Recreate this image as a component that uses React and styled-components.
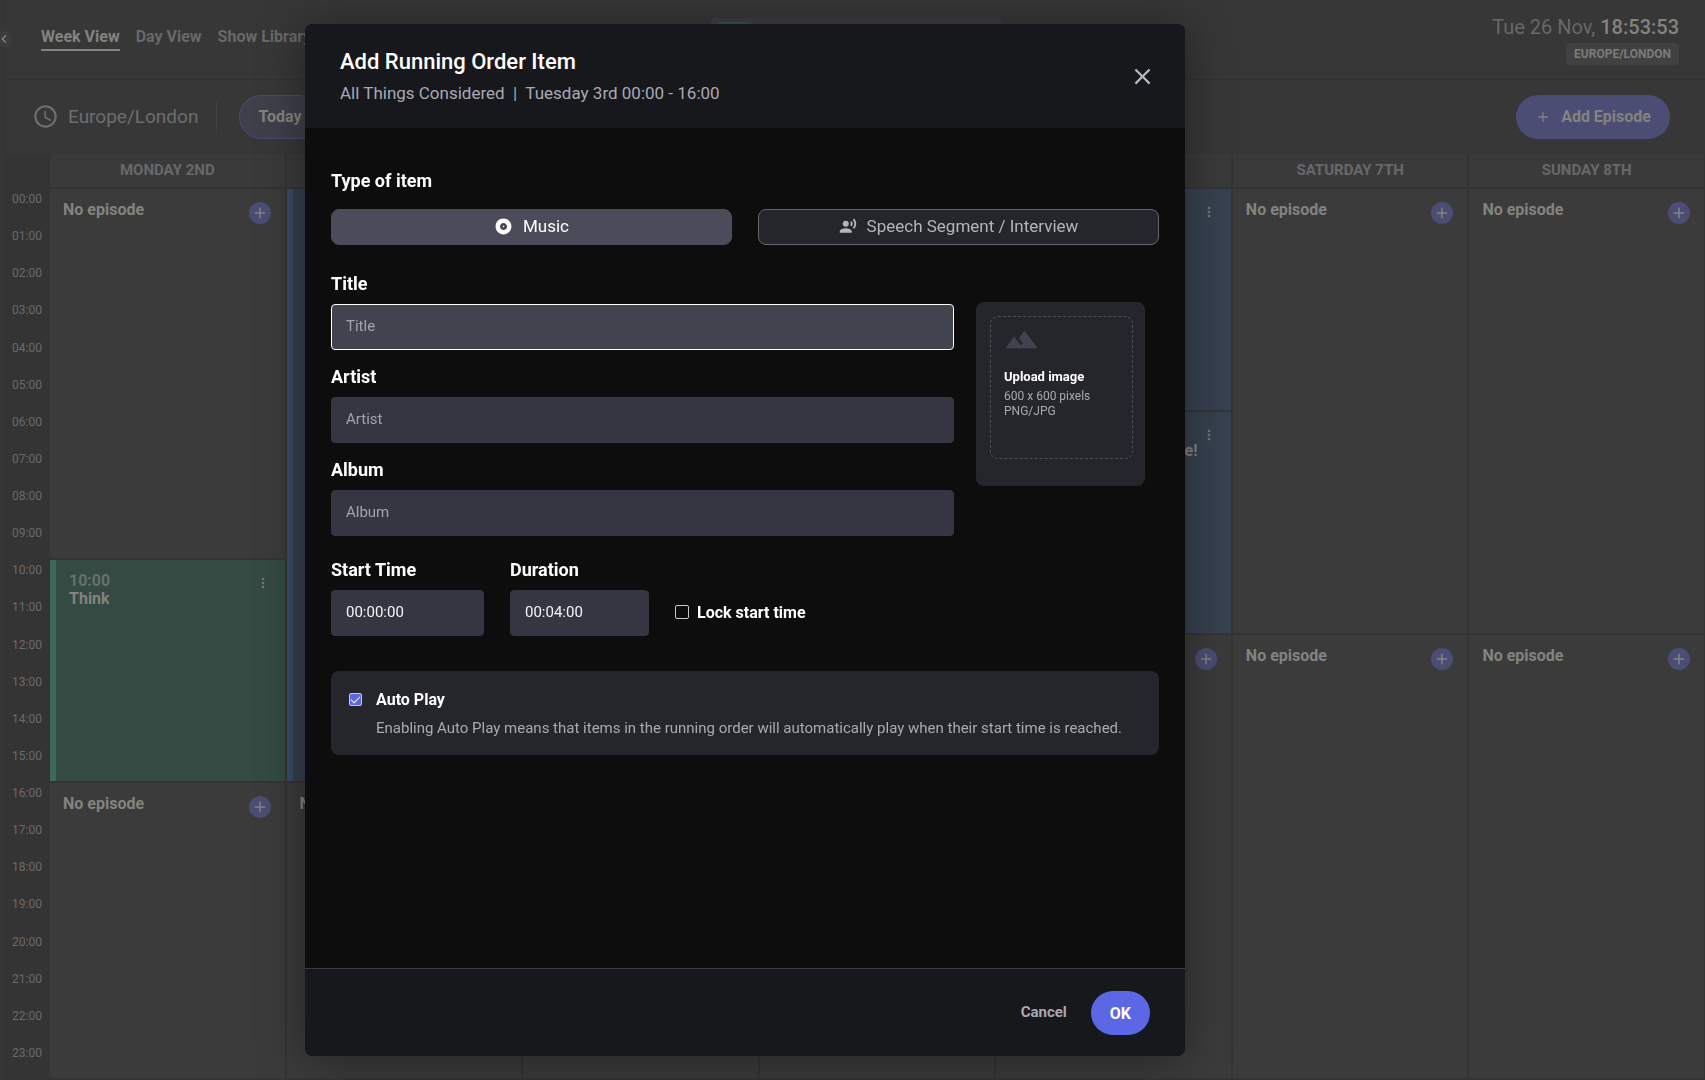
import { useState } from "react";
import styled, { createGlobalStyle, css } from "styled-components";
import {
  MdAccessTime,
  MdAdd,
  MdAlbum,
  MdChevronLeft,
  MdClose,
  MdLandscape,
  MdMoreVert,
  MdRecordVoiceOver,
} from "react-icons/md";

const HOURS = Array.from({ length: 24 }, (_, i) => `${String(i).padStart(2, "0")}:00`);

const DAYS = [
  {
    name: "Monday 2nd",
    slots: [
      { hours: 10 },
      { hours: 6, time: "10:00", title: "Think", tone: "green" },
      { hours: 8 },
    ],
  },
  {
    name: "Tuesday 3rd",
    slots: [
      { hours: 16, time: "00:00", title: "All Things Considered", tone: "blue" },
      { hours: 8 },
    ],
  },
  { name: "Wednesday 4th", slots: [{ hours: 12 }, { hours: 12 }] },
  { name: "Thursday 5th", slots: [{ hours: 12 }, { hours: 12 }] },
  {
    name: "Friday 6th",
    slots: [
      { hours: 6, time: "00:00", title: "Think", tone: "slate" },
      { hours: 6, time: "06:00", title: "Wait Wait... Don't Tell Me!", tone: "slate" },
      { hours: 12 },
    ],
  },
  { name: "Saturday 7th", slots: [{ hours: 12 }, { hours: 12 }] },
  { name: "Sunday 8th", slots: [{ hours: 12 }, { hours: 12 }] },
];

const TONES = {
  green: { bar: "#3a6b5a", fill: "#344a42" },
  blue: { bar: "#3b4969", fill: "#353f4f" },
  slate: { bar: "#3b4969", fill: "#37414f" },
};

function Slot({ slot }) {
  if (!slot.title) {
    return (
      <EmptySlotStyled>
        <SlotTitleStyled>No episode</SlotTitleStyled>
        <RoundButtonStyled type="button" aria-label="Add episode">
          <MdAdd size={18} />
        </RoundButtonStyled>
      </EmptySlotStyled>
    );
  }
  return (
    <EpisodeStyled $tone={TONES[slot.tone]}>
      <div>
        <SlotTimeStyled>{slot.time}</SlotTimeStyled>
        <SlotTitleStyled>{slot.title}</SlotTitleStyled>
      </div>
      <KebabStyled type="button" aria-label="Episode options">
        <MdMoreVert size={16} />
      </KebabStyled>
    </EpisodeStyled>
  );
}

function Schedule() {
  return (
    <PageStyled inert>
      <RailStyled>
        <CollapseStyled type="button" aria-label="Collapse menu">
          <MdChevronLeft size={16} />
        </CollapseStyled>
      </RailStyled>
      <TopBarStyled>
        <NavStyled>
          <NavLinkStyled href="#week" $active>
            Week View
          </NavLinkStyled>
          <NavLinkStyled href="#day">Day View</NavLinkStyled>
          <NavLinkStyled href="#library">Show Library</NavLinkStyled>
        </NavStyled>
        <NowPlayingStyled>
          <NowPlayingTagStyled />
        </NowPlayingStyled>
        <ClockStyled>
          <DateStyled>
            Tue 26 Nov, <strong>18:53:53</strong>
          </DateStyled>
          <ZoneBadgeStyled>EUROPE/LONDON</ZoneBadgeStyled>
        </ClockStyled>
      </TopBarStyled>
      <ToolbarStyled>
        <ZoneStyled>
          <MdAccessTime size={27} />
          Europe/London
        </ZoneStyled>
        <TodayStyled type="button">Today</TodayStyled>
        <AddEpisodeStyled type="button">
          <MdAdd size={16} />
          Add Episode
        </AddEpisodeStyled>
      </ToolbarStyled>
      <CalendarStyled>
        <HoursStyled>
          {HOURS.map((hour) => (
            <li key={hour}>{hour}</li>
          ))}
        </HoursStyled>
        <WeekStyled>
          {DAYS.map((day) => (
            <DayStyled key={day.name} $slots={day.slots}>
              <DayNameStyled>{day.name}</DayNameStyled>
              {day.slots.map((slot, i) => (
                <Slot key={i} slot={slot} />
              ))}
            </DayStyled>
          ))}
        </WeekStyled>
      </CalendarStyled>
    </PageStyled>
  );
}

function Field({ id, label, ...props }) {
  return (
    <FieldStyled>
      <LabelStyled htmlFor={id}>{label}</LabelStyled>
      <InputStyled id={id} type="text" {...props} />
    </FieldStyled>
  );
}

function AddItemModal() {
  const [type, setType] = useState("music");
  const [locked, setLocked] = useState(false);
  const [autoPlay, setAutoPlay] = useState(true);
  return (
    <OverlayStyled>
      <ModalStyled role="dialog" aria-modal="true" aria-labelledby="modal-title">
        <ModalHeaderStyled>
          <div>
            <ModalTitleStyled id="modal-title">Add Running Order Item</ModalTitleStyled>
            <ModalSubtitleStyled>
              All Things Considered&nbsp; |&nbsp; Tuesday 3rd 00:00 - 16:00
            </ModalSubtitleStyled>
          </div>
          <CloseStyled type="button" aria-label="Close">
            <MdClose size={27} />
          </CloseStyled>
        </ModalHeaderStyled>
        <ModalBodyStyled>
          <GroupTitleStyled>Type of item</GroupTitleStyled>
          <TypesStyled>
            <TypeButtonStyled
              type="button"
              $active={type === "music"}
              onClick={() => setType("music")}
            >
              <MdAlbum size={19} />
              Music
            </TypeButtonStyled>
            <TypeButtonStyled
              type="button"
              $active={type === "speech"}
              onClick={() => setType("speech")}
            >
              <MdRecordVoiceOver size={18} />
              Speech Segment / Interview
            </TypeButtonStyled>
          </TypesStyled>
          <DetailsStyled>
            <FieldsStyled>
              <Field id="title" label="Title" placeholder="Title" $active />
              <Field id="artist" label="Artist" placeholder="Artist" />
              <Field id="album" label="Album" placeholder="Album" />
            </FieldsStyled>
            <UploadCardStyled>
              <DropZoneStyled type="button">
                <MdLandscape size={35} />
                <strong>Upload image</strong>
                <span>600 x 600 pixels</span>
                <span>PNG/JPG</span>
              </DropZoneStyled>
            </UploadCardStyled>
          </DetailsStyled>
          <TimingStyled>
            <Field id="start" label="Start Time" defaultValue="00:00:00" />
            <Field id="duration" label="Duration" defaultValue="00:04:00" />
            <LockStyled>
              <CheckboxStyled
                type="checkbox"
                $size={14}
                checked={locked}
                onChange={() => setLocked((prevValue) => !prevValue)}
              />
              Lock start time
            </LockStyled>
          </TimingStyled>
          <AutoPlayStyled>
            <CheckboxStyled
              id="autoplay"
              type="checkbox"
              $size={13}
              checked={autoPlay}
              onChange={() => setAutoPlay((prevValue) => !prevValue)}
            />
            <div>
              <label htmlFor="autoplay">Auto Play</label>
              <p>
                Enabling Auto Play means that items in the running order will
                automatically play when their start time is reached.
              </p>
            </div>
          </AutoPlayStyled>
        </ModalBodyStyled>
        <ModalFooterStyled>
          <CancelStyled type="button">Cancel</CancelStyled>
          <OkStyled type="button">OK</OkStyled>
        </ModalFooterStyled>
      </ModalStyled>
    </OverlayStyled>
  );
}

export default function App() {
  return (
    <>
      <GlobalStyle />
      <Schedule />
      <AddItemModal />
    </>
  );
}

const GlobalStyle = createGlobalStyle`
  * {
    box-sizing: border-box;
    margin: 0;
    padding: 0;
  }
  body {
    background: #373738;
    font-family: Roboto, "Liberation Sans", sans-serif;
    color: #fff;
  }
  button, input {
    font-family: inherit;
    border: 0;
  }
  button {
    cursor: pointer;
  }
  svg {
    display: block;
    flex: none;
  }
  ul {
    list-style: none;
  }
`;

/* ---------- schedule ---------- */

const PageStyled = styled.div`
  position: relative;
  min-height: 100vh;
  display: flex;
  flex-direction: column;
`;
const RailStyled = styled.aside`
  position: absolute;
  top: 0;
  bottom: 0;
  left: 0;
  width: 5px;
  background: #363637;
  border-right: 1px solid #333334;
`;
const CollapseStyled = styled.button`
  position: absolute;
  top: 31px;
  left: -4px;
  width: 16px;
  height: 16px;
  border-radius: 50%;
  background: #3d3d3e;
  color: #858585;
`;
const TopBarStyled = styled.header`
  display: flex;
  align-items: flex-start;
  justify-content: space-between;
  height: 80px;
  margin-left: 6px;
  padding: 0 26px 0 35px;
  border-bottom: 1px solid #323233;
`;
const NavStyled = styled.nav`
  flex: 1;
  display: flex;
  gap: 16px;
  padding-top: 28px;
`;
const NavLinkStyled = styled.a`
  padding-bottom: 3px;
  border-bottom: 2px solid ${({ $active }) => ($active ? "#83837f" : "transparent")};
  color: ${({ $active }) => ($active ? "#83837f" : "#68686a")};
  font-size: 16px;
  line-height: 18px;
  font-weight: 700;
  text-decoration: none;
`;
const NowPlayingStyled = styled.div`
  width: 291px;
  height: 44px;
  margin: 18px 9px 0 0;
  padding: 4px 7px;
  border-radius: 4px;
  background: #3f3f43;
`;
const NowPlayingTagStyled = styled.div`
  width: 34px;
  height: 20px;
  border-radius: 4px;
  background: #345650;
`;
const ClockStyled = styled.div`
  flex: 1;
  display: flex;
  flex-direction: column;
  align-items: flex-end;
  gap: 4px;
  padding-top: 15px;
`;
const DateStyled = styled.p`
  color: #68686a;
  font-size: 20px;
  line-height: 24px;
  strong {
    color: #83837f;
    font-weight: 500;
  }
`;
const ZoneBadgeStyled = styled.span`
  padding: 0 8px;
  border-radius: 4px;
  background: #414141;
  color: #7b7b79;
  font-size: 12px;
  line-height: 22px;
  font-weight: 700;
`;
const ToolbarStyled = styled.div`
  display: flex;
  align-items: center;
  height: 73px;
  padding: 0 35px 0 32px;
`;
const ZoneStyled = styled.div`
  display: flex;
  align-items: center;
  gap: 9px;
  margin-right: 22px;
  padding-right: 18px;
  border-right: 1px solid #404041;
  color: #6d6d6f;
  font-size: 19px;
  line-height: 33px;
`;
const TodayStyled = styled.button`
  height: 44px;
  padding: 0 18px;
  border: 1px solid #4a4b75;
  border-radius: 22px;
  background: #40404b;
  color: #83837f;
  font-size: 16px;
  font-weight: 700;
`;
const AddEpisodeStyled = styled.button`
  display: flex;
  align-items: center;
  gap: 10px;
  height: 44px;
  margin-left: auto;
  padding: 0 19px;
  border-radius: 22px;
  background: #4c4d74;
  color: #83837f;
  font-size: 16px;
  font-weight: 700;
`;
const CalendarStyled = styled.main`
  flex: 1;
  display: flex;
  background: #343435;
`;
const HoursStyled = styled.ul`
  flex: none;
  display: grid;
  grid-template-rows: repeat(24, 1fr);
  width: 44px;
  margin-left: 6px;
  padding: 36px 8px 0 0;
  color: #6a6a6b;
  font-size: 12px;
  line-height: 20px;
  text-align: right;
`;
const WeekStyled = styled.div`
  flex: 1;
  display: grid;
  grid-template-columns: repeat(7, minmax(0, 1fr));
  gap: 2px;
  padding-right: 1px;
`;
const DayStyled = styled.section`
  display: grid;
  grid-template-rows: 35px ${({ $slots }) =>
    $slots.map(({ hours }) => `minmax(0, ${hours}fr)`).join(" ")};
  padding-top: 1px;
`;
const DayNameStyled = styled.h2`
  margin-bottom: 2px;
  background: #3a3a3b;
  color: #68686a;
  font-size: 15px;
  line-height: 33px;
  font-weight: 700;
  text-align: center;
  text-transform: uppercase;
`;
const slotBox = css`
  display: flex;
  justify-content: space-between;
  align-items: flex-start;
  margin-bottom: 2px;
`;
const EmptySlotStyled = styled.article`
  ${slotBox}
  padding: 12px 14px 0 13px;
  background: #3b3b3c;
`;
const EpisodeStyled = styled.article`
  ${slotBox}
  padding: 12px 14px 0 13px;
  border-left: 6px solid ${({ $tone }) => $tone.bar};
  background: ${({ $tone }) => $tone.fill};
`;
const SlotTimeStyled = styled.p`
  color: #67706c;
  font-size: 16px;
  line-height: 18px;
  font-weight: 700;
`;
const SlotTitleStyled = styled.h3`
  color: #83837f;
  font-size: 16px;
  line-height: 18px;
  font-weight: 700;
`;
const RoundButtonStyled = styled.button`
  display: grid;
  place-items: center;
  width: 22px;
  height: 22px;
  margin-top: 1px;
  border-radius: 50%;
  background: #4c4d74;
  color: #83837f;
`;
const KebabStyled = styled.button`
  margin-top: 3px;
  background: none;
  color: #747774;
`;

/* ---------- modal ---------- */

const OverlayStyled = styled.div`
  position: fixed;
  inset: 0;
  display: grid;
  grid-template-columns: minmax(0, 305fr) minmax(0, 880px) minmax(0, 520fr);
  padding: 24px 0;
`;
const ModalStyled = styled.section`
  grid-column: 2;
  display: flex;
  flex-direction: column;
  overflow: hidden;
  border-radius: 8px;
  background: #0d0d0e;
  box-shadow: 0 4px 48px rgba(0, 0, 0, 0.4);
`;
const ModalHeaderStyled = styled.header`
  display: flex;
  align-items: center;
  justify-content: space-between;
  padding: 24px 29px 23px 35px;
  background: #17181c;
`;
const ModalTitleStyled = styled.h1`
  font-size: 22px;
  line-height: 28px;
  font-weight: 500;
`;
const ModalSubtitleStyled = styled.p`
  margin-top: 5px;
  color: #a9a9b3;
  font-size: 17px;
  line-height: 24px;
`;
const CloseStyled = styled.button`
  background: none;
  color: #b9b9c3;
`;
const ModalBodyStyled = styled.div`
  flex: 1;
  overflow: auto;
  padding: 43px 26px;
`;
const labelText = css`
  display: block;
  font-size: 18px;
  line-height: 20px;
  font-weight: 700;
`;
const GroupTitleStyled = styled.h2`
  ${labelText}
`;
const LabelStyled = styled.label`
  ${labelText}
`;
const TypesStyled = styled.div`
  display: grid;
  grid-template-columns: 1fr 1fr;
  gap: 26px;
  margin-top: 18px;
`;
const TypeButtonStyled = styled.button`
  display: flex;
  align-items: center;
  justify-content: center;
  gap: 10px;
  height: 36px;
  padding-bottom: 2px;
  border: 1px solid ${({ $active }) => ($active ? "#4b4b5a" : "#64656e")};
  border-radius: 8px;
  background: ${({ $active }) => ($active ? "#4b4b5a" : "#25262b")};
  color: ${({ $active }) => ($active ? "#fff" : "#b4b4be")};
  font-size: 17px;
`;
const DetailsStyled = styled.div`
  display: grid;
  grid-template-columns: minmax(0, 1fr) 169px;
  align-items: start;
  gap: 22px;
  margin-top: 29px;
  padding-right: 14px;
`;
const FieldsStyled = styled.div`
  display: grid;
  gap: 17px;
`;
const FieldStyled = styled.div`
  display: grid;
  gap: 10px;
`;
const InputStyled = styled.input`
  width: 100%;
  height: 46px;
  padding: 0 14px 2px;
  border: 1px solid ${({ $active }) => ($active ? "#fff" : "#363642")};
  border-radius: 4px;
  background: ${({ $active }) => ($active ? "#41434f" : "#363642")};
  color: #f4f4f6;
  font-size: 15px;
  &::placeholder {
    color: #a3a3ae;
  }
`;
const UploadCardStyled = styled.div`
  height: 184px;
  margin-top: 28px;
  padding: 14px 12px 14px 14px;
  border-radius: 8px;
  background: #25262b;
`;
const DropZoneStyled = styled.button`
  display: flex;
  flex-direction: column;
  align-items: flex-start;
  width: 100%;
  height: 143px;
  padding: 5px 13px;
  border: 1px dashed #4d4e56;
  border-radius: 8px;
  background: none;
  color: #a9a9b3;
  font-size: 12px;
  line-height: 15px;
  svg {
    color: #42434f;
  }
  strong {
    margin: 12px 0 5px;
    color: #fff;
    font-size: 13px;
    font-weight: 700;
  }
`;
const TimingStyled = styled.div`
  display: grid;
  grid-template-columns: 153px 139px auto;
  justify-content: start;
  align-items: end;
  gap: 26px;
  margin-top: 24px;
`;
const LockStyled = styled.label`
  display: flex;
  align-items: center;
  gap: 8px;
  height: 46px;
  padding-bottom: 2px;
  font-size: 16px;
  font-weight: 700;
`;
const CheckboxStyled = styled.input`
  appearance: none;
  flex: none;
  width: ${({ $size }) => $size}px;
  height: ${({ $size }) => $size}px;
  border: 1px solid #c9c9d3;
  border-radius: 2px;
  &:checked {
    display: grid;
    place-items: center;
    background: #5b67e5;
  }
  &:checked::before {
    content: "";
    width: 8px;
    height: 4px;
    margin-bottom: 2px;
    border: solid #fff;
    border-width: 0 0 1px 1px;
    rotate: -45deg;
  }
`;
const AutoPlayStyled = styled.div`
  display: flex;
  gap: 14px;
  margin-top: 35px;
  padding: 19px 18px 17px;
  border-radius: 8px;
  background: #25262b;
  font-size: 15px;
  input {
    margin-top: 3px;
  }
  label {
    display: block;
    font-size: 16px;
    line-height: 20px;
    font-weight: 700;
  }
  p {
    margin-top: 8px;
    color: #a9a9b3;
    line-height: 20px;
  }
`;
const ModalFooterStyled = styled.footer`
  display: flex;
  align-items: center;
  justify-content: flex-end;
  gap: 24px;
  padding: 22px 35px 21px;
  border-top: 1px solid #3a3b42;
  background: #17181c;
`;
const CancelStyled = styled.button`
  padding-bottom: 2px;
  background: none;
  color: #a9a9b3;
  font-size: 15px;
  font-weight: 700;
`;
const OkStyled = styled.button`
  height: 44px;
  padding: 0 19px;
  border-radius: 22px;
  background: #5b67e5;
  color: #fff;
  font-size: 16px;
  font-weight: 700;
`;
